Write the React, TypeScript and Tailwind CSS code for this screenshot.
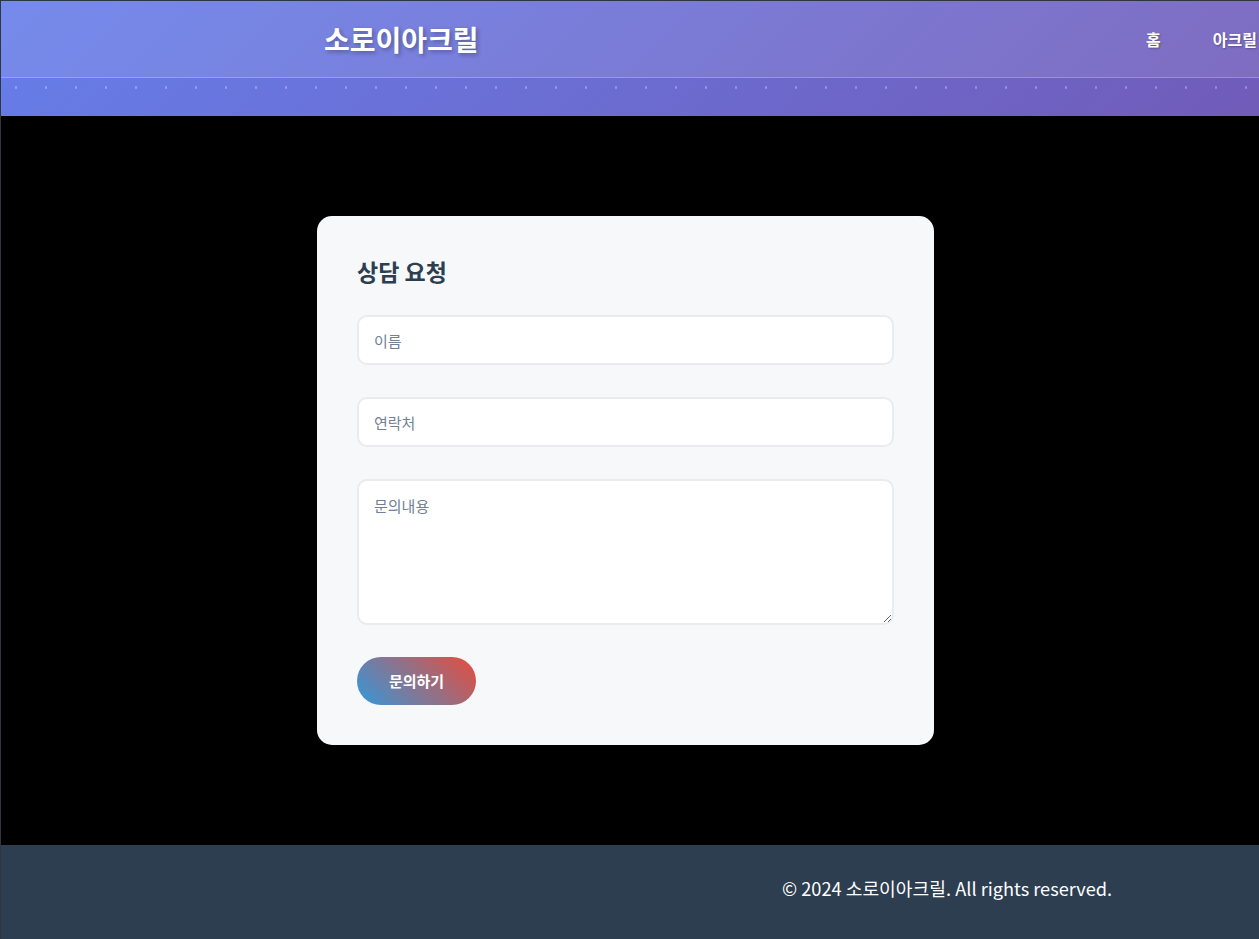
import React from 'react';

const font = { fontFamily: '"Noto Sans CJK KR", "Noto Sans", sans-serif' };

const field =
  'w-full rounded-[10px] border-2 border-[#e9ecef] bg-white px-[15px] text-[15px] text-[#2c3e50] placeholder:text-[#718096] outline-none';

export default function App() {
  return (
    <div className="min-h-[939px] w-[1259px] overflow-hidden bg-black border-t border-l border-[#2f3640]" style={font}>
      <header className="bg-[linear-gradient(135deg,#667eea_0%,#764ba2_100%)] bg-[length:1900px_100%] bg-no-repeat">
        <div className="flex h-[76px] items-center bg-white/10 pl-[323px] whitespace-nowrap">
          <div className="w-[822px] shrink-0 text-[28px] font-bold text-white [text-shadow:2px_2px_4px_rgba(0,0,0,0.3)]">
            소로이아크릴
          </div>
          <nav className="flex shrink-0 gap-[52px] text-[16px] font-bold text-white [text-shadow:1px_1px_2px_rgba(0,0,0,0.3)]">
            <span>홈</span>
            <span>아크릴 제품</span>
            <span>상담 요청</span>
          </nav>
        </div>
        <div className="h-[39px] border-t border-white/30 bg-[radial-gradient(circle,rgba(255,255,255,0.3)_1px,transparent_1.5px)] bg-[length:30px_19px] bg-repeat-x" />
      </header>

      <main className="flex justify-center py-[100px] pr-[9px]">
        <div className="w-[617px] rounded-[15px] bg-[#f7f8fa] p-[40px]">
          <h3 className="mb-[29px] text-[23px] font-bold leading-[30px] text-[#2c3e50]">상담 요청</h3>
          <form className="flex flex-col gap-[32px]" onSubmit={(e) => e.preventDefault()}>
            <input type="text" placeholder="이름" className={`h-[50px] ${field}`} style={font} />
            <input type="text" placeholder="연락처" className={`h-[50px] ${field}`} style={font} />
            <textarea placeholder="문의내용" className={`h-[146px] py-[14px] ${field}`} style={font} />
            <div>
              <button
                type="submit"
                className="h-[48px] w-[119px] rounded-full bg-[linear-gradient(45deg,#3498db,#e74c3c)] text-[15px] font-bold text-white"
                style={font}
              >
                문의하기
              </button>
            </div>
          </form>
        </div>
      </main>

      <footer className="flex h-[94px] items-center bg-[#2c3e50] pb-[6px] pl-[781px] whitespace-nowrap">
        <p className="text-[18.2px] text-white">© 2024 소로이아크릴. All rights reserved.</p>
      </footer>
    </div>
  );
}
